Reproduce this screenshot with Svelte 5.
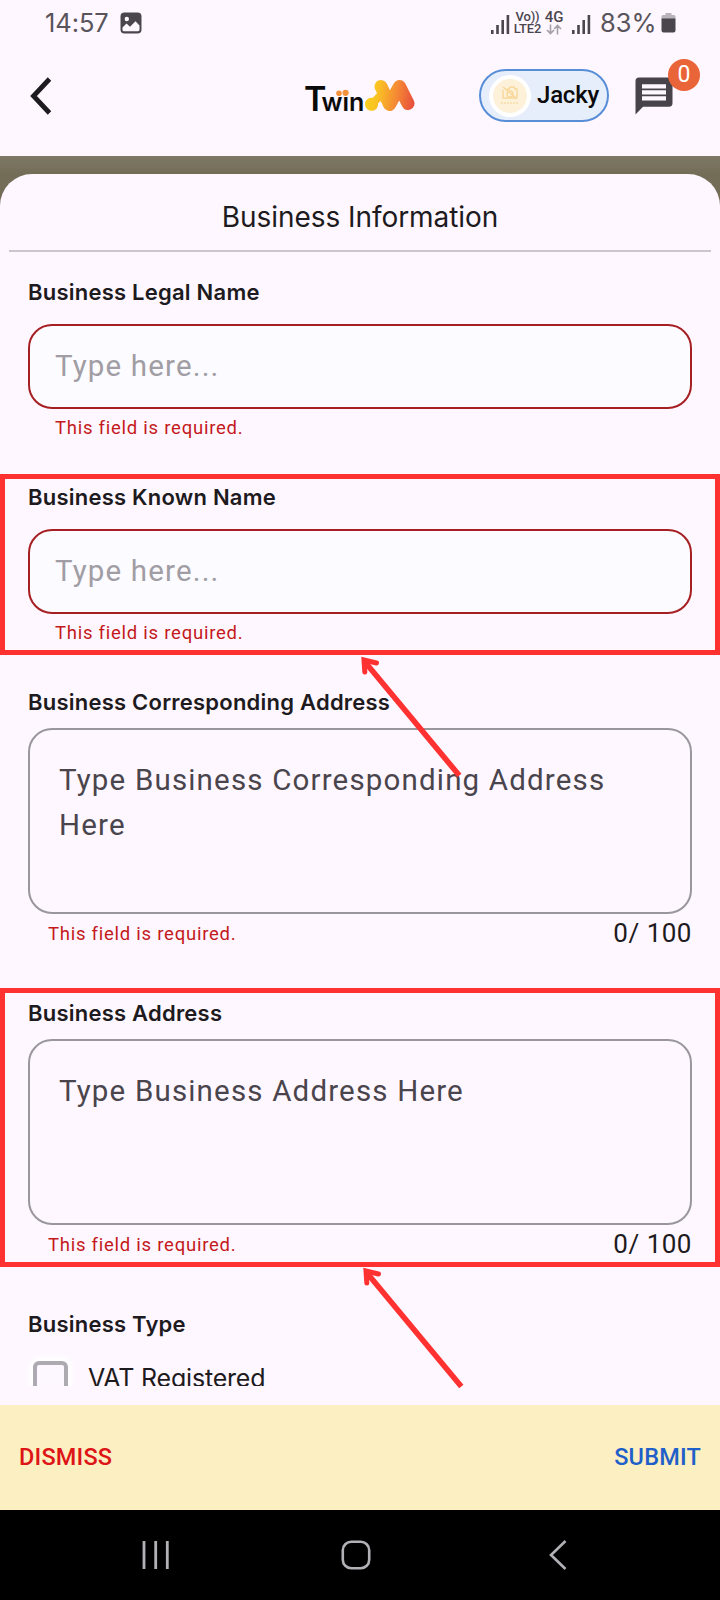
<script>
  const required = 'This field is required.'
  const bars = [4, 9, 14, 19]
  const maxLength = 100

  let legalName = ''
  let knownName = ''
  let correspondingAddress = ''
  let address = ''
  let vatRegistered = false
</script>

<div class="screen">
  <div class="status-bar">
    <span class="time">14:57</span>
    <svg class="image-icon" width="22" height="22" viewBox="0 0 22 22">
      <rect x="0.5" y="0.5" width="21" height="21" rx="4" fill="#4b464d" />
      <circle cx="6.8" cy="7" r="2.2" fill="#fef7ff" />
      <path d="M2.5 15.5l4-4 3.5 3.3 5.5-5.5 4 4.2v4.3q0 1.4-1.4 1.4H4q-1.5 0-1.5-1.5z" fill="#fef7ff" />
    </svg>
    <div class="status-right">
      <svg class="signal" width="19" height="20">
        {#each bars as h, i}
          <rect x={i * 5.2} y={20 - h} width="2.6" height={h} fill="#4b464d" />
        {/each}
      </svg>
      <div class="volte"><span>Vo))</span><span class="lte">LTE2</span></div>
      <div class="network">
        <span>4G</span>
        <svg width="16" height="11" viewBox="0 0 16 11" fill="none" stroke="#a5a0a8" stroke-width="1.6">
          <path d="M4.5 0.5v9M1 6l3.5 3.6L8 6M11.5 10.5v-9M8.2 5l3.3-3.6L15 5" />
        </svg>
      </div>
      <svg class="signal" width="19" height="20">
        {#each bars as h, i}
          <rect x={i * 5.2} y={20 - h} width="2.6" height={h} fill="#4b464d" />
        {/each}
      </svg>
      <span class="percent">83%</span>
      <svg class="battery" width="15" height="20" viewBox="0 0 15 20">
        <path d="M4.5 0h6v2H13q1.5 0 1.5 1.5V6H0.5V3.5Q0.5 2 2 2h2.5z" fill="#b9b3bb" />
        <path d="M0.5 5.5h14v12q0 2-2 2h-10q-2 0-2-2z" fill="#4b464d" />
      </svg>
    </div>
  </div>

  <header>
    <button class="back" aria-label="Back">
      <svg width="24" height="40" viewBox="0 0 24 40" fill="none" stroke="#1d1a20" stroke-width="4.8">
        <path d="M20.5 3L4.5 20l16 17" />
      </svg>
    </button>
    <svg class="logo" width="112" height="42" viewBox="0 -3 112 42">
      <defs>
        <linearGradient id="mark" gradientUnits="userSpaceOnUse" x1="60" y1="0" x2="111" y2="8">
          <stop offset="0" stop-color="#f9d71c" />
          <stop offset="0.3" stop-color="#fac024" />
          <stop offset="0.65" stop-color="#f58a34" />
          <stop offset="1" stop-color="#e8503c" />
        </linearGradient>
      </defs>
      <text class="logo-text" x="-1" y="33"><tspan font-size="34">T</tspan><tspan font-size="25" dx="-5">wın</tspan></text>
      <circle cx="34" cy="15.3" r="2.8" fill="#f3913c" />
      <circle cx="40.6" cy="14.8" r="3.1" fill="#f3913c" />
      <g stroke="url(#mark)" fill="none" stroke-linecap="round" stroke-linejoin="round">
        <path d="M66.5 26.2l0.1 0.1" stroke-width="13" />
        <path d="M68 25l7-7" stroke-width="8" />
        <path d="M76 8.5L84.5 26.5L94.5 8.5L103 25.5" stroke-width="13" />
      </g>
    </svg>
    <div class="user">
      <span class="avatar">
        <span class="avatar-inner">
          <svg width="18" height="20" viewBox="0 0 18 20" fill="none" stroke="#f8d79a" stroke-width="1.4">
            <path d="M2 1l14 12M2 4v8h12M6 3h2l1-2h4l1 2h2v9" />
            <circle cx="9" cy="8" r="3" />
            <path d="M0 17h18" stroke-width="2" stroke-dasharray="2 1" opacity="0.6" />
          </svg>
        </span>
      </span>
      <span class="user-name">Jacky</span>
    </div>
    <div class="chat">
      <svg width="38" height="38" viewBox="0 0 38 38">
        <path d="M4 0.5h30q3.5 0 3.5 3.5v22q0 3.8-3.5 3.8H8L0.5 37.5V4Q0.5 0.5 4 0.5z" fill="#48434b" />
        <path d="M7 9.3h24M7 15.3h24M7 21.3h24" stroke="#fef7ff" stroke-width="4.3" />
      </svg>
      <span class="badge">0</span>
    </div>
  </header>

  <div class="backdrop">
    <main class="sheet">
      <h1>Business Information</h1>
      <form class="fields">
        <div class="field">
          <label for="legal">Business Legal Name</label>
          <input id="legal" type="text" placeholder="Type here..." bind:value={legalName} />
          <p class="error-message">{required}</p>
        </div>

        <div class="field">
          <label for="known">Business Known Name</label>
          <input id="known" type="text" placeholder="Type here..." bind:value={knownName} />
          <p class="error-message">{required}</p>
          <div class="highlight highlight-name"></div>
          <svg class="arrow arrow-name" width="104" height="124" viewBox="0 0 104 124">
            <path d="M99.3 120.5L5 7" stroke-width="5.6" />
            <path d="M4.8 17L4 5L16.5 8" stroke-width="5" stroke-linecap="round" />
          </svg>
        </div>

        <div class="field area">
          <label for="corresponding">Business Corresponding Address</label>
          <textarea id="corresponding" placeholder="Type Business Corresponding Address Here" bind:value={correspondingAddress}></textarea>
          <div class="meta">
            <p class="error-message">{required}</p>
            <span class="count">{correspondingAddress.length}/ {maxLength}</span>
          </div>
        </div>

        <div class="field area">
          <label for="address">Business Address</label>
          <textarea id="address" placeholder="Type Business Address Here" bind:value={address}></textarea>
          <div class="meta">
            <p class="error-message">{required}</p>
            <span class="count">{address.length}/ {maxLength}</span>
          </div>
          <div class="highlight highlight-address"></div>
          <svg class="arrow arrow-address" width="104" height="124" viewBox="0 0 104 124">
            <path d="M99.3 120.5L5 7" stroke-width="5.6" />
            <path d="M4.8 17L4 5L16.5 8" stroke-width="5" stroke-linecap="round" />
          </svg>
        </div>

        <div class="field last">
          <span class="label">Business Type</span>
          <label class="check">
            <input type="checkbox" bind:checked={vatRegistered} />
            <span>VAT Registered</span>
          </label>
        </div>
      </form>
    </main>
  </div>

  <footer>
    <button class="dismiss">DISMISS</button>
    <button class="submit">SUBMIT</button>
  </footer>

  <nav>
    <svg width="28" height="30" viewBox="0 0 28 30" stroke="#b3b1b6" stroke-width="2.8">
      <path d="M2 1v28M13.7 1v28M25.3 1v28" />
    </svg>
    <svg class="home" width="30" height="30" viewBox="0 0 30 30" fill="none" stroke="#b3b1b6" stroke-width="2.6">
      <rect x="1.8" y="1.8" width="26.4" height="26.4" rx="8.5" />
    </svg>
    <svg width="18" height="30" viewBox="0 0 18 30" fill="none" stroke="#b3b1b6" stroke-width="2.6">
      <path d="M16.5 1L2 15l14.5 14" />
    </svg>
  </nav>
</div>

<style>
  :global(body) {
    margin: 0;
    background: #fef7ff;
  }
  .screen {
    display: flex;
    flex-direction: column;
    width: 720px;
    height: 1600px;
    overflow: hidden;
    background: #fef7ff;
    color: #1d1a20;
    font-family: Roboto, sans-serif;
  }
  button {
    border: 0;
    padding: 0;
    background: none;
    font: inherit;
    letter-spacing: inherit;
  }
  svg {
    display: block;
    flex: none;
  }

  .status-bar {
    display: flex;
    align-items: center;
    height: 46px;
    padding: 0 44px 0 45px;
    color: #4b464d;
  }
  .time,
  .percent {
    font-family: Inter, sans-serif;
    font-weight: 400;
    font-size: 25.5px;
    line-height: 48px;
    color: #59545b;
  }
  .time {
    width: 75px;
    letter-spacing: -0.1px;
  }
  .status-right {
    display: flex;
    align-items: center;
    margin-left: auto;
  }
  .signal {
    margin-top: 1px;
  }
  .volte {
    display: flex;
    flex-direction: column;
    align-items: center;
    width: 27px;
    margin: 0 5px 0 4px;
    font-size: 13px;
    font-weight: 500;
    line-height: 12px;
    letter-spacing: -0.2px;
  }
  .network {
    display: flex;
    flex-direction: column;
    align-items: center;
    width: 16px;
    margin-right: 10px;
    font-size: 15px;
    font-weight: 500;
    line-height: 13px;
  }
  .percent {
    width: 57px;
    margin-left: 9px;
  }
  .battery {
    margin-left: 4px;
  }

  header {
    display: flex;
    align-items: center;
    height: 110px;
    box-sizing: border-box;
    padding: 0 19px 11px 29px;
  }
  .back {
    width: 276px;
  }
  .logo {
    overflow: visible;
  }
  .logo-text {
    font-family: Inter, sans-serif;
    font-weight: 600;
    fill: #0b0a0b;
  }
  .user {
    display: flex;
    align-items: center;
    width: 130px;
    height: 53px;
    box-sizing: border-box;
    margin-left: 62px;
    padding-left: 8px;
    border: 2px solid #588dd8;
    border-radius: 27px;
    background: #e6eefb;
  }
  .avatar {
    display: flex;
    align-items: center;
    justify-content: center;
    width: 42px;
    height: 42px;
    border-radius: 50%;
    background: #fff;
  }
  .avatar-inner {
    display: flex;
    align-items: center;
    justify-content: center;
    width: 34px;
    height: 34px;
    border-radius: 50%;
    background: #fdf1da;
  }
  .user-name {
    margin: -2px 0 0 6px;
    color: #0b0a0b;
    font-size: 24px;
    font-weight: 500;
    letter-spacing: -0.2px;
  }
  .chat {
    position: relative;
    margin-left: 26px;
  }
  .badge {
    position: absolute;
    top: -18px;
    left: 33px;
    width: 32px;
    height: 32px;
    border-radius: 50%;
    background: #ea6439;
    color: #fff;
    font-size: 23px;
    line-height: 31px;
    text-align: center;
  }

  .backdrop {
    height: 1249px;
    box-sizing: border-box;
    padding-top: 18px;
    background: linear-gradient(#7d7966, #736c57 18px);
  }
  .sheet {
    height: 1231px;
    border-radius: 32px 32px 0 0;
    background: #fef7ff;
  }
  h1 {
    height: 76px;
    margin: 0 9px;
    border-bottom: 2px solid #cbc5cf;
    font-family: Inter, sans-serif;
    font-size: 28px;
    font-weight: 400;
    line-height: 86px;
    letter-spacing: -0.05px;
    text-align: center;
  }
  .fields {
    display: flex;
    flex-direction: column;
    gap: 42px;
    padding: 25px 28px 0;
  }
  .field {
    position: relative;
    display: flex;
    flex-direction: column;
  }
  .area {
    margin-bottom: 8px;
  }
  .field > label:not(.check),
  .label {
    font-family: Inter, sans-serif;
    font-size: 22px;
    font-weight: 600;
    line-height: 30px;
    letter-spacing: 0.23px;
  }
  input[type='text'] {
    height: 85px;
    box-sizing: border-box;
    margin-top: 17px;
    padding: 0 25px 2px;
    border: 2px solid #a61f22;
    border-radius: 24px;
    outline: none;
    background: #fcfbff;
    font-family: inherit;
    font-size: 29.5px;
    letter-spacing: 1.16px;
  }
  input::placeholder {
    color: #a19da4;
    opacity: 1;
  }
  .error-message {
    margin: 7px 0 0 27px;
    color: #c4191c;
    font-size: 18.5px;
    line-height: 24px;
    letter-spacing: 0.75px;
  }
  textarea {
    height: 186px;
    box-sizing: border-box;
    margin-top: 11px;
    padding: 28px 28px 27px 29px;
    border: 2px solid #99969c;
    border-radius: 24px;
    outline: none;
    resize: none;
    overflow: hidden;
    background: transparent;
    font-family: inherit;
    font-size: 29.5px;
    line-height: 45px;
    letter-spacing: 1.17px;
  }
  textarea::placeholder {
    color: #4a454d;
    opacity: 1;
  }
  .meta {
    display: flex;
    justify-content: space-between;
    height: 30px;
    margin-top: 4px;
  }
  .meta .error-message {
    margin: 4px 0 0 20px;
  }
  .count {
    font-size: 26px;
    line-height: 30px;
    letter-spacing: 0.5px;
  }
  /* the scroll area ends halfway through the checkbox row */
  .last {
    height: 77px;
    margin: 0 -28px;
    padding: 0 28px;
    overflow: hidden;
  }
  .check {
    display: flex;
    flex: none;
    align-items: center;
    gap: 20px;
    margin-top: 21px;
    padding-left: 5px;
    font-family: Inter, sans-serif;
    font-size: 25px;
    line-height: 36px;
    letter-spacing: -0.2px;
  }
  input[type='checkbox'] {
    appearance: none;
    width: 35px;
    height: 35px;
    margin: 0;
    border: 4px solid #adabb1;
    border-radius: 6px;
    background: #fdf8ff;
    box-shadow: 0 0 5px 4px #fff;
  }

  .highlight {
    position: absolute;
    left: -28px;
    right: -28px;
    border: 5px solid #ff3131;
    pointer-events: none;
  }
  .highlight-name {
    top: -8px;
    bottom: -10px;
  }
  .highlight-address {
    top: -10px;
    bottom: -8px;
  }
  .arrow {
    position: absolute;
    z-index: 1;
    fill: none;
    stroke: #ff3131;
    pointer-events: none;
  }
  .arrow-name {
    top: 173px;
    left: 332px;
  }
  .arrow-address {
    top: 268px;
    left: 334px;
  }

  footer {
    display: flex;
    align-items: center;
    justify-content: space-between;
    height: 105px;
    box-sizing: border-box;
    padding: 0 19px 2px;
    background: #fcefc1;
    font-size: 23.5px;
    font-weight: 500;
    letter-spacing: 0.2px;
  }
  .dismiss {
    color: #dd1517;
  }
  .submit {
    color: #1f5fc9;
  }
  nav {
    display: flex;
    align-items: center;
    justify-content: space-between;
    height: 90px;
    padding: 0 153px 0 142px;
    background: #000;
  }
  .home {
    margin-right: 7px;
  }
</style>
